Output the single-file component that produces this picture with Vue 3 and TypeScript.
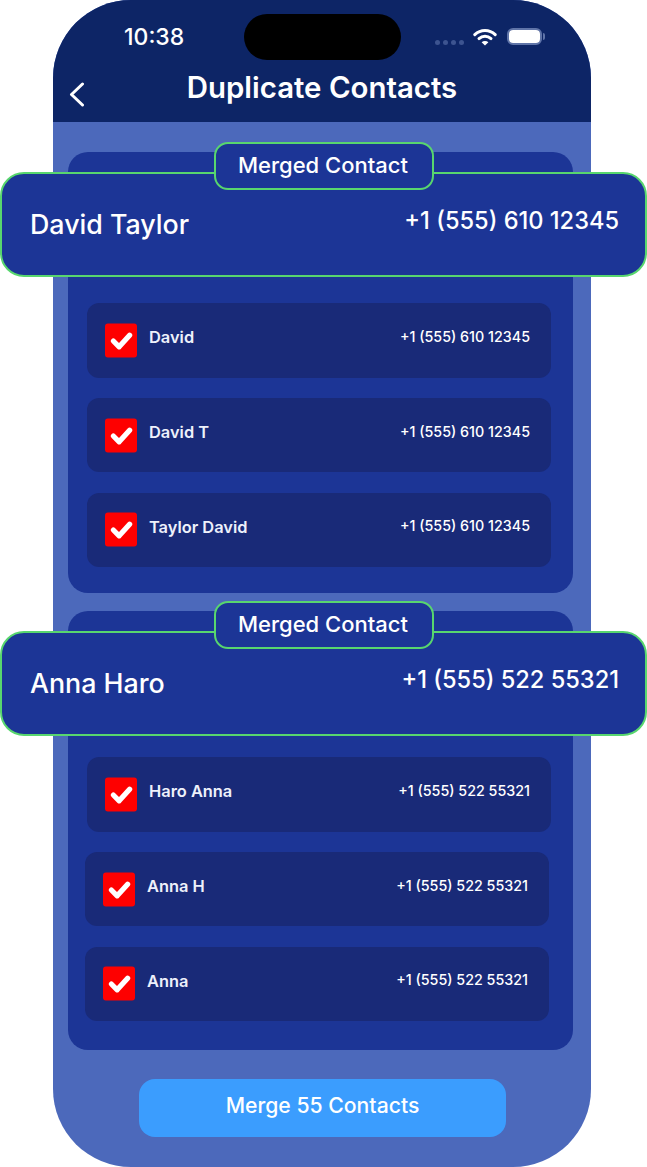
<template>
  <div class="page">
    <div class="phone">
      <header class="top">
        <div class="status">
          <span class="time">10:38</span>
          <span class="island"></span>
          <span class="dots"><i></i><i></i><i></i><i></i></span>
          <svg class="wifi" width="24" height="18" viewBox="0 0 24 18" fill="none" stroke="#fff" stroke-width="3" stroke-linecap="round">
            <path d="M1.8 6.6C7.6 1 16.4 1 22.2 6.6" />
            <path d="M6 10.6C9.5 7.4 14.5 7.4 18 10.6" />
            <path d="M12 17.6 8.6 14.2C10.5 12.6 13.5 12.6 15.4 14.2Z" fill="#fff" stroke="none" />
          </svg>
          <span class="battery"><span class="charge"></span></span>
        </div>
        <div class="titlebar">
          <svg class="back" width="16" height="25" viewBox="0 0 16 25" fill="none" stroke="#fff" stroke-width="3" stroke-linecap="round" stroke-linejoin="round">
            <path d="M13.5 2 2.5 12.5 13.5 23" />
          </svg>
          <h1>Duplicate Contacts</h1>
        </div>
      </header>

      <main class="body">
        <section v-for="group in groups" :key="group.name" class="card" :class="group.cls">
          <div class="merged">
            <span class="pill">Merged Contact</span>
            <span class="merged-name">{{ group.name }}</span>
            <span class="merged-phone">{{ group.phone }}</span>
          </div>
          <div class="rows">
            <div v-for="row in group.rows" :key="row.name" class="row" :class="{ shifted: row.shifted }">
              <svg class="check" width="33" height="35" viewBox="0 0 33 35">
                <rect width="33" height="35" rx="3" fill="#fe0000" />
                <path d="M8.6 18 14.6 24 25.4 12" fill="none" stroke="#fff" stroke-width="5.4" stroke-linecap="round" stroke-linejoin="round" />
              </svg>
              <span class="row-name">{{ row.name }}</span>
              <span class="row-phone">{{ group.phone }}</span>
            </div>
          </div>
        </section>

        <button class="merge" type="button">Merge 55 Contacts</button>
      </main>
    </div>
  </div>
</template>

<script setup lang="ts">
type Row = { name: string; shifted?: boolean };
type Group = { name: string; phone: string; cls: string; rows: Row[] };

const groups: Group[] = [
  {
    name: 'David Taylor',
    phone: '+1 (555) 610 12345',
    cls: 'first',
    rows: [{ name: 'David' }, { name: 'David T' }, { name: 'Taylor David' }]
  },
  {
    name: 'Anna Haro',
    phone: '+1 (555) 522 55321',
    cls: 'second',
    rows: [
      { name: 'Haro Anna' },
      { name: 'Anna H', shifted: true },
      { name: 'Anna', shifted: true }
    ]
  }
];
</script>

<style>
body {
  background: #fff;
}
</style>

<style scoped>
.page {
  width: 647px;
  height: 1167px;
  padding-left: 53px;
  box-sizing: border-box;
  overflow: hidden;
  font-family: Inter, 'Liberation Sans', sans-serif;
  color: #fff;
}

.phone {
  width: 538px;
  height: 1167px;
  border-radius: 78px;
  background: #4c69bb;
}

.top {
  height: 122px;
  box-sizing: border-box;
  padding-top: 14px;
  background: #0d2566;
  border-radius: 78px 78px 0 0;
}

.status {
  display: flex;
  align-items: center;
  height: 46px;
  padding-left: 71px;
}

.time {
  width: 60px;
  font-size: 23px;
  font-weight: 500;
  white-space: nowrap;
}

.island {
  width: 157px;
  height: 46px;
  margin-left: 60px;
  border-radius: 23px;
  background: #000;
}

.dots {
  display: flex;
  gap: 3px;
  margin-left: 34px;
  margin-top: 10px;
}

.dots i {
  width: 5px;
  height: 5px;
  border-radius: 50%;
  background: #3d5490;
}

.wifi {
  margin-left: 9px;
  margin-top: -1px;
}

.battery {
  position: relative;
  width: 35px;
  height: 17px;
  margin-left: 10px;
  margin-top: -1px;
  box-sizing: border-box;
  padding: 0;
  border: 2px solid #5f74a8;
  border-radius: 6px;
}

.battery::after {
  content: '';
  position: absolute;
  top: 3px;
  right: -5px;
  width: 2px;
  height: 7px;
  border-radius: 0 2px 2px 0;
  background: #5f74a8;
}

.charge {
  display: block;
  height: 100%;
  border-radius: 4px;
  background: #fff;
}

.titlebar {
  display: grid;
  grid-template-columns: 1fr auto 1fr;
  margin-top: 10px;
}

.back {
  margin: 12px 0 0 16px;
}

.titlebar h1 {
  margin: 0;
  font-size: 29.4px;
  font-weight: 600;
  line-height: 36px;
  white-space: nowrap;
}

.body {
  display: flex;
  flex-direction: column;
  padding: 30px 18px 0 15px;
}

.card {
  width: 505px;
  padding: 20px 22px 26px 19px;
  box-sizing: border-box;
  border-radius: 20px;
  background: #1c3596;
}

.card.second {
  margin-top: 18px;
  padding-bottom: 29px;
}

.merged {
  position: relative;
  display: flex;
  justify-content: space-between;
  align-items: center;
  width: 647px;
  height: 105px;
  margin-left: -87px;
  padding: 0 26px 0 28px;
  box-sizing: border-box;
  border: 2px solid #58d66e;
  border-radius: 24px;
  background: #1c3596;
}

.pill {
  position: absolute;
  top: -32px;
  left: 212px;
  width: 220px;
  height: 48px;
  padding-right: 2px;
  box-sizing: border-box;
  border: 2px solid #58d66e;
  border-radius: 14px;
  background: #1c3596;
  font-size: 22px;
  font-weight: 500;
  line-height: 42px;
  text-align: center;
}

.merged-name {
  margin-bottom: 2px;
  font-size: 26.8px;
  font-weight: 500;
}

.merged-phone {
  margin-bottom: 8px;
  font-size: 23.6px;
  font-weight: 500;
}

.rows {
  display: flex;
  flex-direction: column;
  gap: 20.25px;
  margin-top: 26px;
}

.second .rows {
  margin-top: 21px;
}

.row {
  display: flex;
  align-items: center;
  height: 74.5px;
  padding: 0 21px 0 18px;
  box-sizing: border-box;
  border-radius: 12px;
  background: #192a78;
}

.row.shifted {
  margin: 0 2px 0 -2px;
}

.check {
  flex: none;
  width: 32px;
}

.row-name {
  margin-left: 12px;
  margin-bottom: 6px;
  font-size: 16.4px;
  font-weight: 600;
  color: #eef1fb;
}

.row-phone {
  margin-left: auto;
  margin-bottom: 8px;
  font-size: 14.3px;
  font-weight: 500;
}

.merge {
  align-self: flex-start;
  width: 367px;
  height: 58px;
  margin: 29px 0 0 71px;
  padding: 0 0 6px;
  border: none;
  border-radius: 16px;
  background: #3b9dfe;
  color: #fff;
  font-family: inherit;
  font-size: 21.2px;
  font-weight: 500;
}
</style>
